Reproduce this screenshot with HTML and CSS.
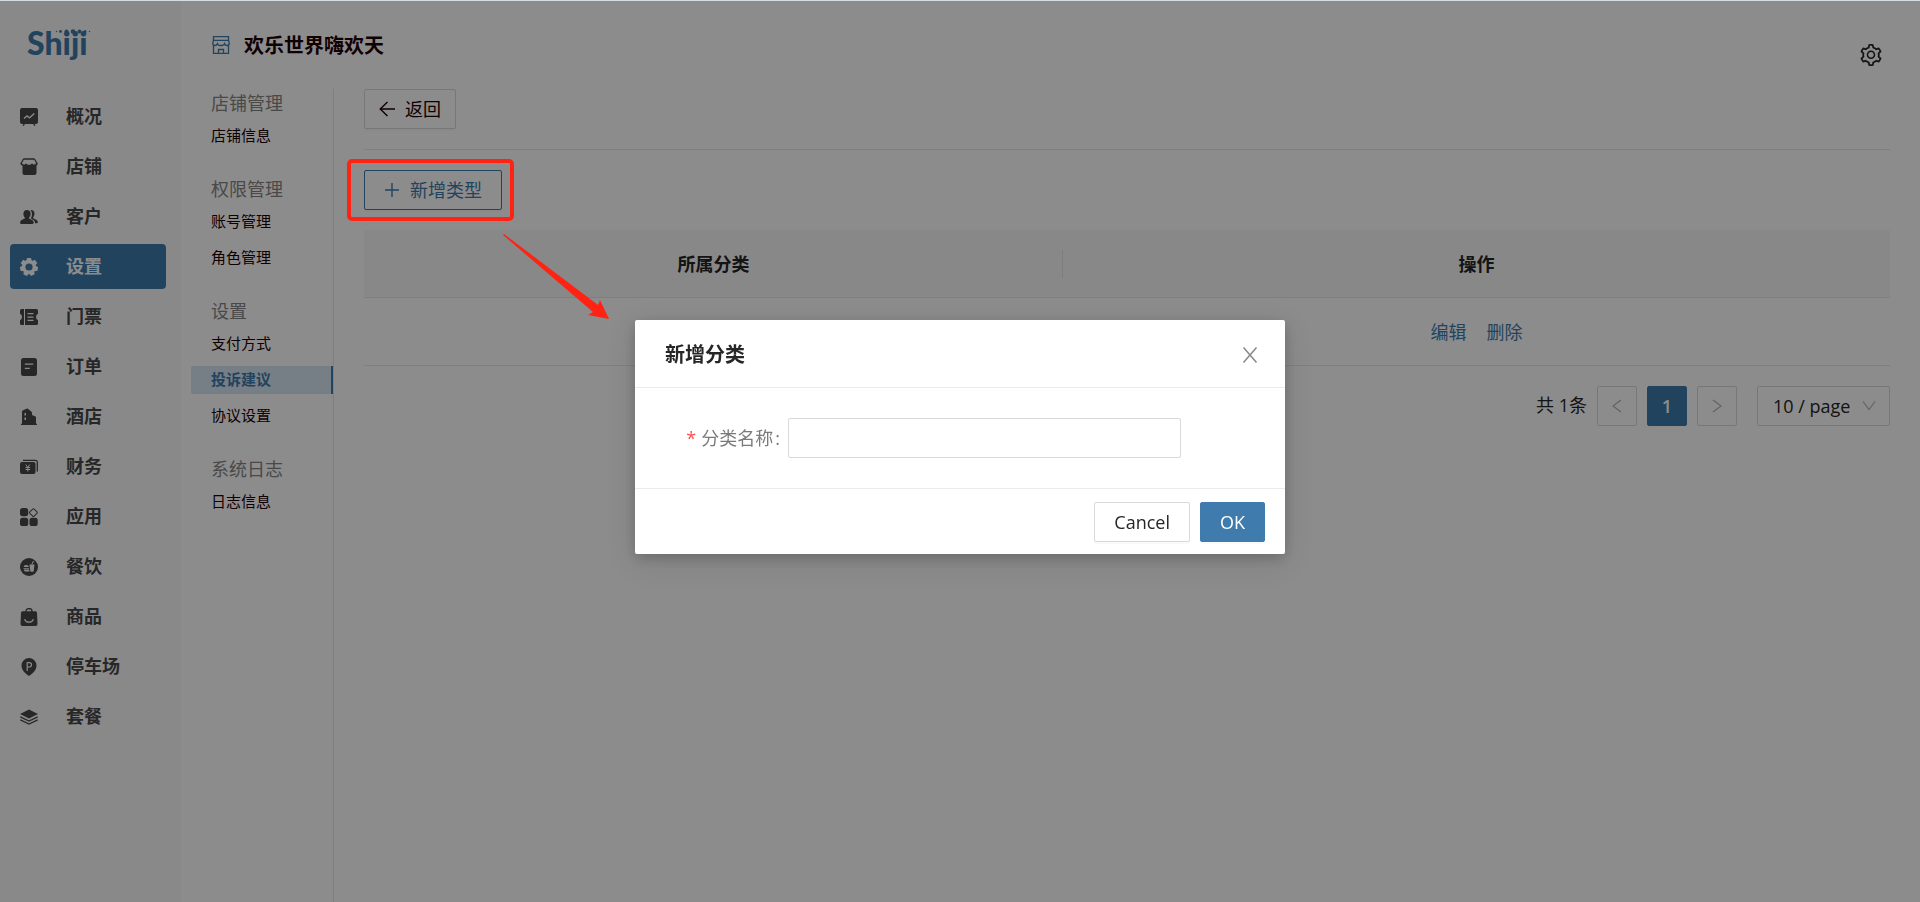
FILE: index.html
```
<!DOCTYPE html>
<html lang="zh-CN">
<head>
<meta charset="utf-8">
<title>投诉建议</title>
<link rel="stylesheet" href="styles.css">
</head>
<body>
<div class="app">
  <aside class="sidebar">
    <div class="logo">
      <span class="logo-text">Shiji</span>
      <svg class="logo-dots" viewBox="0 0 36 5" aria-hidden="true"><circle cx="1.500" cy="2.500" r=".7"/><circle cx="5.500" cy="2.500" r="1.400"/><circle cx="11.500" cy="2.500" r="2"/><circle cx="18" cy="2.500" r="2.300"/><circle cx="24.500" cy="2.500" r="2"/><circle cx="30" cy="2.500" r="1.500"/><circle cx="34.500" cy="2.500" r=".7"/></svg>
    </div>
    <nav class="menu">
      <a href="#" class="menu-item"><svg viewBox="0 0 18 18"><path fill="currentColor" fill-rule="evenodd" d="M2 0h14a2 2 0 0 1 2 2v12a2 2 0 0 1-2 2h-1.500l1 1.500-1.200.5-1.300-2H5l-1.300 2-1.200-.5 1-1.500H2a2 2 0 0 1-2-2V2a2 2 0 0 1 2-2zM3.500 10l1 1L7 8.800l2.500 2L14.800 6l-1-1-4.300 3.900L7 7z"/></svg><span>概况</span></a>
      <a href="#" class="menu-item"><svg viewBox="0 0 18 18"><path fill="none" stroke="currentColor" stroke-width="1.300" d="M1 5.500 3.300 1.500Q3.600 1 4.200 1h9.600q.6 0 .9.500L17 5.500"/><path fill="currentColor" d="M.3 5h1.500q1 2 3 1.500Q5.500 5.500 6 5.500t1.200 1q1.800.7 3.600 0 .7-1 1.200-1t1.200 1q2 .5 3-1.500h1.500q0 2-1.200 2.700V15q0 2-2 2h-10q-2 0-2-2V7.700Q.3 7 .3 5z"/></svg><span>店铺</span></a>
      <a href="#" class="menu-item"><svg viewBox="0 0 18 18"><path fill="currentColor" d="M7 2c2.300 0 3.600 1.600 3.600 3.800 0 1.700-.6 3-1.500 3.800v1c1 .8 4 1.200 4.500 3.400.2 1.300-.2 2-1 2H1.200c-1 0-1.300-.8-1-2 .5-2.200 3.600-2.600 4.600-3.400v-1C4 8.800 3.400 7.500 3.400 5.800 3.400 3.600 4.700 2 7 2z"/><path fill="currentColor" d="M10.500 2c2.500-.3 4 1.300 4 3.500 0 1.500-.5 2.800-1.300 3.700v1c1.200.9 4.300 1.500 4.700 3.600.1.900-.2 1.400-.9 1.400h-1.900c0-2.700-2.500-3.600-4-4.400V9.900c1.200-2.400 1.400-5.500-.6-7.900z"/></svg><span>客户</span></a>
      <a href="#" class="menu-item active"><svg viewBox="0 0 18 18"><circle cx="9" cy="9" r="5.400" fill="none" stroke="currentColor" stroke-width="3.600"/><g fill="currentColor"><path d="M7 0h4l.7 3H6.300z"/><path d="M7 0h4l.7 3H6.300z" transform="rotate(51.400 9 9)"/><path d="M7 0h4l.7 3H6.300z" transform="rotate(102.800 9 9)"/><path d="M7 0h4l.7 3H6.300z" transform="rotate(154.300 9 9)"/><path d="M7 0h4l.7 3H6.300z" transform="rotate(205.700 9 9)"/><path d="M7 0h4l.7 3H6.300z" transform="rotate(257.100 9 9)"/><path d="M7 0h4l.7 3H6.300z" transform="rotate(308.600 9 9)"/></g></svg><span>设置</span></a>
      <a href="#" class="menu-item"><svg viewBox="0 0 18 18"><path fill="currentColor" fill-rule="evenodd" d="M1.500 1H4v16H1.500Q0 17 0 15.500v-3.300q2-.9 2-3.200T0 5.800V2.500Q0 1 1.500 1zM5 1h11.500Q18 1 18 2.500v3.300Q16 6.700 16 9t2 3.200v3.300q0 1.500-1.500 1.500H5zm2.500 4v1.300h6V5zm0 3.400v1.300h6V8.400zm0 3.400v1.300h6v-1.300z"/></svg><span>门票</span></a>
      <a href="#" class="menu-item"><svg viewBox="0 0 18 18"><path fill="currentColor" fill-rule="evenodd" d="M3.500 0h11Q17 0 17 2.500v13q0 2.500-2.500 2.500h-11Q1 18 1 15.500v-13Q1 0 3.500 0zm1.300 5.500v1.200h8.400V5.500zm0 4.300V11h5V9.800z"/></svg><span>订单</span></a>
      <a href="#" class="menu-item"><svg viewBox="0 0 18 18"><path fill="currentColor" fill-rule="evenodd" d="M2 15.800V3.500Q2 2.800 2.700 2.500L6.500.7Q7.500.3 8.500 1.200l3 2.500q.5.500.5 1.300V7l3.500 1.500q.5.300.5 1v6.300h1v1.100H1v-1.100zM4.500 5v2.500h1.500V5zm0 4.500V12h1.500V9.500z"/></svg><span>酒店</span></a>
      <a href="#" class="menu-item"><svg viewBox="0 0 18 18"><path fill="none" stroke="currentColor" stroke-width="1.300" d="M3 2.300h12.500q1.800 0 1.800 1.800v9.500"/><path fill="currentColor" d="M2 4h11.500q2 0 2 2v8q0 2-2 2H2q-2 0-2-2V6q0-2 2-2z"/><path fill="none" stroke="#fafafa" d="m5.800 6.500 2 3 2-3M5.500 9.500h4.600M5.500 11.500h4.600M7.800 9.500v4"/></svg><span>财务</span></a>
      <a href="#" class="menu-item"><svg viewBox="0 0 18 18"><g fill="currentColor"><rect width="8.200" height="8.200" rx="2.600"/><rect y="9.800" width="8.200" height="8.200" rx="2.600"/><rect x="9.500" y="9.800" width="8.200" height="8.200" rx="2.600"/></g><rect x="10.400" y="1.600" width="6" height="6" rx="1" transform="rotate(45 13.400 4.600)" fill="none" stroke="currentColor"/></svg><span>应用</span></a>
      <a href="#" class="menu-item"><svg viewBox="0 0 18 18"><circle cx="9" cy="9" r="9" fill="currentColor"/><path fill="#fafafa" d="M9.500 6.500h5L13.700 13q-.1.800-.8.800h-1.800q-.7 0-.8-.8zM3.500 9q.3-2 2.700-2t2.700 2zm0 .9h5.600v.9H3.500zm.2 1.700h5.500l.2 1.900H5.500q-1.500 0-1.800-1.900z"/><path stroke="#fafafa" fill="none" d="M12 6.500 12.700 4l1.500-.5"/></svg><span>餐饮</span></a>
      <a href="#" class="menu-item"><svg viewBox="0 0 18 18"><path fill="none" stroke="currentColor" stroke-width="1.300" d="M6 4V3a3 2.400 0 0 1 6 0v1"/><path fill="currentColor" d="M2.500 3.300h13Q17 3.300 17 4.800l.5 11.200q0 2-2 2h-13q-2 0-2-2L1 4.800q0-1.500 1.500-1.500z"/><path fill="none" stroke="#fafafa" stroke-width="1.200" stroke-linecap="round" d="M4.800 11.500q.8 2.700 4.200 2.700t4.200-2.700"/></svg><span>商品</span></a>
      <a href="#" class="menu-item"><svg viewBox="0 0 18 18"><path fill="currentColor" d="M9 0a7.500 7.500 0 0 1 7.500 7.500c0 4-2.500 7-7.500 10.500C4 14.500 1.500 11.500 1.500 7.500A7.500 7.500 0 0 1 9 0z"/><path fill="none" stroke="#fafafa" stroke-width="1.200" d="M7.200 13V4.600h1.900q2.400 0 2.400 2.200T9.100 9H7.200"/></svg><span>停车场</span></a>
      <a href="#" class="menu-item"><svg viewBox="0 0 18 18"><path fill="currentColor" d="M9 1.500 18 6l-9 4.500L0 6z"/><path fill="none" stroke="currentColor" stroke-width="1.300" d="M.3 8.800 9 13l8.700-4.200M.3 11.800 9 16l8.700-4.200"/></svg><span>套餐</span></a>
    </nav>
  </aside>

  <main class="main">
    <header class="topbar">
      <svg class="shop-icon" viewBox="0 0 18 18" fill="none" stroke="currentColor" stroke-width="1.300"><path d="M1.500.7h15v3.600H1.500zM1.500 4.300.7 7.500q.2 2 2.200 2t2.500-1.700q.6 1.700 2.400 1.700H10q1.900 0 2.500-1.700.5 1.700 2.600 1.700t2.200-2l-.8-3.200M1.500 9.500v7.800h15V9.500M6.500 17v-3.500h5V17"/></svg>
      <h1 class="shop-name">欢乐世界嗨欢天</h1>
      <button type="button" class="settings" aria-label="设置"><svg viewBox="64 64 896 896"><path fill="currentColor" d="M924.8 625.7l-65.5-56c3.1-19 4.700-38.400 4.700-57.800s-1.600-38.800-4.700-57.800l65.500-56a32.030 32.030 0 009.300-35.200l-.9-2.600a443.740 443.740 0 00-79.700-137.900l-1.800-2.100a32.120 32.120 0 00-35.100-9.500l-81.300 28.900c-30-24.600-63.500-44-99.700-57.600l-15.700-85a32.050 32.050 0 00-25.800-25.700l-2.700-.5c-52.100-9.400-106.900-9.400-159 0l-2.700.5a32.050 32.050 0 00-25.800 25.700l-15.800 85.400a351.860 351.860 0 00-99 57.400l-81.900-29.100a32 32 0 00-35.100 9.500l-1.800 2.100a446.020 446.020 0 00-79.700 137.900l-.9 2.600c-4.500 12.500-.8 26.500 9.300 35.200l66.300 56.600c-3.100 18.800-4.600 38-4.600 57.100 0 19.200 1.500 38.400 4.600 57.100L99 625.500a32.030 32.030 0 00-9.300 35.200l.9 2.600c18.100 50.400 44.900 96.900 79.700 137.900l1.800 2.100a32.120 32.120 0 0035.100 9.500l81.900-29.100c29.800 24.500 63.100 43.900 99 57.400l15.800 85.400a32.050 32.050 0 0025.800 25.700l2.700.5a449.400 449.400 0 00159 0l2.700-.5a32.050 32.050 0 0025.800-25.700l15.700-85a350 350 0 0099.700-57.600l81.300 28.900a32 32 0 0035.100-9.500l1.800-2.100c34.800-41.100 61.600-87.500 79.700-137.900l.9-2.600c4.500-12.300.8-26.300-9.300-35zM788.300 465.900c2.500 15.100 3.800 30.600 3.800 46.100s-1.300 31-3.800 46.100l-6.600 40.100 74.700 63.900a370.030 370.030 0 01-42.600 73.600L721 702.800l-31.400 25.800c-23.900 19.600-50.500 35-79.300 45.800l-38.100 14.300-17.900 97a377.500 377.500 0 01-85 0l-17.900-97.200-37.800-14.500c-28.500-10.800-55-26.200-78.700-45.700l-31.400-25.900-93.400 33.200c-17-22.900-31.200-47.600-42.600-73.600l75.500-64.500-6.500-40c-2.400-14.900-3.700-30.300-3.700-45.500 0-15.300 1.200-30.600 3.700-45.500l6.500-40-75.500-64.500c11.300-26.100 25.600-50.700 42.600-73.600l93.400 33.200 31.400-25.900c23.700-19.500 50.200-34.900 78.700-45.700l37.900-14.300 17.900-97.200c28.100-3.200 56.800-3.200 85 0l17.900 97 38.100 14.300c28.700 10.800 55.400 26.200 79.300 45.800l31.400 25.800 92.800-32.900c17 22.900 31.200 47.600 42.600 73.600L781.800 426l6.500 39.900zM512 326c-97.200 0-176 78.800-176 176s78.800 176 176 176 176-78.800 176-176-78.800-176-176-176zm79.200 255.200A111.600 111.600 0 01512 614c-29.900 0-58-11.700-79.200-32.800A111.600 111.600 0 01400 502c0-29.900 11.700-58 32.800-79.200C454 401.600 482.100 390 512 390c29.900 0 58 11.600 79.200 32.800A111.600 111.600 0 01624 502c0 29.900-11.700 58-32.800 79.200z"/></svg></button>
    </header>

    <div class="columns">
      <nav class="subnav">
        <section class="subnav-group"><h2>店铺管理</h2><a href="#">店铺信息</a></section>
        <section class="subnav-group"><h2>权限管理</h2><a href="#">账号管理</a><a href="#">角色管理</a></section>
        <section class="subnav-group"><h2>设置</h2><a href="#">支付方式</a><a href="#" class="current">投诉建议</a><a href="#">协议设置</a></section>
        <section class="subnav-group"><h2>系统日志</h2><a href="#">日志信息</a></section>
      </nav>

      <section class="content">
        <div class="back-row">
          <button type="button" class="btn"><svg class="icon" viewBox="0 0 16 16" fill="none" stroke="currentColor" stroke-width="1.400"><path d="M16 8H1.200M8.500 1 1.200 8l7.300 7"/></svg>返回</button>
        </div>
        <div class="add-row">
          <button type="button" class="btn btn-outline"><svg class="icon" viewBox="0 0 16 16" fill="none" stroke="currentColor" stroke-width="1.400"><path d="M8 1v14M1 8h14"/></svg>新增类型</button>
          <span class="callout-box"></span>
          <svg class="callout-arrow" viewBox="0 0 106 85" aria-hidden="true"><path d="M0 1 1 0 95 71 97 66 106 85 85 81 90 78z"/></svg>
        </div>
        <table class="table">
          <thead><tr><th class="col-type">所属分类</th><th>操作</th></tr></thead>
          <tbody><tr><td></td><td><a href="#">编辑</a><a href="#">删除</a></td></tr></tbody>
        </table>
        <div class="pager">
          <span class="total">共 1条</span>
          <button type="button" class="page-btn" disabled aria-label="上一页"><svg viewBox="0 0 12 14"><path d="M10 1 2 7l8 6"/></svg></button>
          <button type="button" class="page-btn page-current">1</button>
          <button type="button" class="page-btn" disabled aria-label="下一页"><svg viewBox="0 0 12 14"><path d="m2 1 8 6-8 6"/></svg></button>
          <div class="page-size">
            <select aria-label="每页条数"><option>10 / page</option></select>
            <svg viewBox="0 0 14 12"><path d="m1 1.500 6 8 6-8"/></svg>
          </div>
        </div>
      </section>
    </div>
  </main>
</div>

<div class="mask"></div>

<div class="modal" role="dialog" aria-labelledby="modal-title">
  <header class="modal-head">
    <h2 id="modal-title">新增分类</h2>
    <button type="button" class="modal-close" aria-label="关闭"><svg viewBox="0 0 16 16"><path d="M1.500.5l13 15M14.500.5l-13 15"/></svg></button>
  </header>
  <form class="modal-body">
    <label for="category-name"><span class="required">*</span>分类名称<span class="colon">:</span></label>
    <input id="category-name" type="text">
  </form>
  <footer class="modal-foot">
    <button type="button" class="btn">Cancel</button>
    <button type="button" class="btn btn-primary">OK</button>
  </footer>
</div>
</body>
</html>
```
FILE: styles.css
```
* { box-sizing: border-box; }

body {
  margin: 0;
  border-top: 1px solid #d6dce4;
  background: #fff;
  color: #262626;
  font-family: "Open Sans", "Noto Sans CJK SC", sans-serif;
  font-size: 18px;
  line-height: 28px;
}

h1, h2 { margin: 0; }
a { text-decoration: none; }
svg { display: block; flex: none; }
button, input, select { font: inherit; color: inherit; }

.app {
  display: flex;
  min-height: calc(100vh - 1px);
}

/* primary navigation */
.sidebar {
  flex: none;
  width: 181px;
  background: #fafafa;
}

.logo {
  position: relative;
  height: 93px;
  padding: 20px 0 0 27px;
  color: #3f7bac;
}

.logo-text {
  display: block;
  font-family: Lato, "Liberation Sans", sans-serif;
  font-size: 32px;
  font-weight: 900;
  line-height: 44px;
}

.logo-dots {
  position: absolute;
  top: 28px;
  left: 55px;
  width: 36px;
  height: 5px;
  fill: currentColor;
}

.menu {
  display: flex;
  flex-direction: column;
  gap: 5px;
  padding: 0 15px 0 10px;
}

.menu-item {
  display: flex;
  align-items: center;
  gap: 28px;
  height: 45px;
  padding-left: 10px;
  border-radius: 4px;
  color: #484848;
  font-weight: 700;
}

.menu-item svg { width: 18px; height: 18px; }
.menu-item span { padding-bottom: 2px; }

.menu-item.active {
  background: #3f7bac;
  color: #fff;
}

/* page header */
.main {
  flex: 1;
  display: flex;
  flex-direction: column;
  min-width: 0;
  padding-left: 10px;
}

.topbar {
  display: flex;
  align-items: flex-start;
  height: 88px;
  padding: 0 38px 0 21px;
}

.shop-icon {
  width: 18px;
  height: 18px;
  margin-top: 35px;
  color: #3f7bac;
}

.shop-name {
  flex: 1;
  margin: 31px 0 0 14px;
  color: #1c0004;
  font-size: 20px;
  line-height: 28px;
}

.settings {
  margin-top: 43px;
  padding: 0;
  border: 0;
  background: none;
}

.settings svg { width: 22px; height: 22px; }

/* secondary navigation */
.columns {
  flex: 1;
  display: flex;
}

.subnav {
  flex: none;
  width: 143px;
  border-right: 1px solid #e8e8e8;
}

.subnav-group { margin-bottom: 25px; }

.subnav-group h2 {
  margin-bottom: 5px;
  padding-left: 20px;
  color: #868686;
  font-size: 18px;
  font-weight: 400;
  line-height: 28px;
}

.subnav-group a {
  display: block;
  height: 28px;
  padding-left: 20px;
  color: #1c0004;
  font-size: 15px;
  line-height: 26px;
}

.subnav-group a + a { margin-top: 8px; }

.subnav-group .current {
  border-right: 2px solid #3f7bac;
  border-radius: 2px 0 0 2px;
  background: #d8e6f5;
  color: #3f7bac;
  font-weight: 700;
}

/* content */
.content {
  flex: 1;
  min-width: 0;
  padding: 0 30px;
}

.btn {
  display: inline-flex;
  align-items: center;
  height: 40px;
  padding: 0 14px;
  border: 1px solid #d9d9d9;
  border-radius: 2px;
  background: #fff;
  box-shadow: 0 2px 0 rgba(0, 0, 0, .02);
}

.btn .icon {
  width: 16px;
  height: 16px;
  margin-right: 10px;
}

.back-row {
  display: flex;
  padding-bottom: 20px;
  border-bottom: 1px solid #e8e8e8;
}

.back-row .btn { color: #1c0004; }

.add-row {
  position: relative;
  display: flex;
  padding: 20px 0;
}

.btn-outline {
  padding: 0 19px;
  border-color: #3f7bac;
  color: #3f7bac;
}

.callout-box {
  position: absolute;
  z-index: 3;
  top: 9px;
  left: -17px;
  width: 167px;
  height: 62px;
  border: 4px solid #ff2314;
  border-radius: 5px;
}

.callout-arrow {
  position: absolute;
  z-index: 3;
  top: 84px;
  left: 139px;
  width: 106px;
  height: 85px;
  fill: #ff2314;
}

.table {
  width: 100%;
  border-collapse: separate;
  border-spacing: 0;
  table-layout: fixed;
  text-align: center;
}

.table th,
.table td {
  height: 68px;
  padding: 0;
  border-bottom: 1px solid #e8e8e8;
}

.table th {
  background: #f8f8f8;
  font-weight: 700;
}

.table .col-type {
  width: 45.8%;
  background: linear-gradient(#e4e4e4, #e4e4e4) right center / 1px 28px no-repeat #f8f8f8;
}

.table a {
  margin: 0 10px;
  color: #3f7bac;
}

.pager {
  display: flex;
  justify-content: flex-end;
  align-items: center;
  gap: 10px;
  padding-top: 20px;
}

.total { padding-bottom: 3px; }

.page-btn {
  display: flex;
  align-items: center;
  justify-content: center;
  width: 40px;
  height: 40px;
  padding: 0;
  border: 1px solid #d9d9d9;
  border-radius: 2px;
  background: #fff;
}

.page-btn svg { width: 12px; height: 14px; }

.page-btn path,
.page-size path {
  fill: none;
  stroke: #b4b4b4;
  stroke-width: 1.2;
}

.page-current {
  border-color: #3f7bac;
  background: #3f7bac;
  color: #fff;
  font-weight: 600;
}

.page-size {
  position: relative;
  width: 133px;
  margin-left: 10px;
}

.page-size select {
  display: block;
  width: 100%;
  height: 40px;
  padding: 0 15px;
  border: 1px solid #d9d9d9;
  border-radius: 2px;
  background: #fff;
  appearance: none;
}

.page-size svg {
  position: absolute;
  top: 14px;
  right: 14px;
  width: 14px;
  height: 12px;
  pointer-events: none;
}

/* dialog */
.mask {
  position: fixed;
  z-index: 2;
  inset: 1px 0 0;
  background: rgba(0, 0, 0, .45);
}

.modal {
  position: fixed;
  z-index: 4;
  top: 320px;
  left: 50%;
  width: 650px;
  transform: translateX(-50%);
  border-radius: 2px;
  background: #fff;
  box-shadow: 0 4px 14px rgba(0, 0, 0, .18), 0 8px 32px rgba(0, 0, 0, .1);
}

.modal-head {
  display: flex;
  align-items: center;
  justify-content: space-between;
  height: 68px;
  padding: 2px 27px 0 30px;
  border-bottom: 1px solid #ebebeb;
}

.modal-head h2 {
  font-size: 20px;
  line-height: 28px;
}

.modal-close {
  padding: 0;
  border: 0;
  background: none;
}

.modal-close svg {
  width: 16px;
  height: 16px;
  fill: none;
  stroke: #8c8c8c;
  stroke-width: 1.6;
}

.modal-body {
  display: grid;
  grid-template-columns: 5fr 16fr 3fr;
  align-items: center;
  padding: 30px;
}

.modal-body label {
  padding-right: 8px;
  color: #7a7a7a;
  text-align: right;
  white-space: nowrap;
}

.required {
  margin-right: 5px;
  color: #ff4d4f;
}

.colon { margin-left: 2px; }

.modal-body input {
  width: 100%;
  height: 40px;
  padding: 0 12px;
  border: 1px solid #d9d9d9;
  border-radius: 2px;
}

.modal-foot {
  display: flex;
  justify-content: flex-end;
  gap: 10px;
  padding: 13px 20px 12px;
  border-top: 1px solid #ebebeb;
}

.modal-foot .btn { padding: 0 19px; }

.modal-foot .btn-primary {
  border-color: #3f7bac;
  background: #3f7bac;
  color: #fff;
}
```
